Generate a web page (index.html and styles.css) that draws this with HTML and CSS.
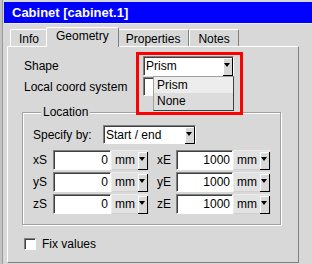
FILE: index.html
```html
<!DOCTYPE html>
<html lang="en">
<head>
    <meta charset="UTF-8">
    <title>Cabinet [cabinet.1]</title>
    <link rel="stylesheet" href="styles.css">
</head>
<body>
    <div class="window">
        <div class="titlebar">Cabinet [cabinet.1]</div>

        <div class="body">
            <div class="tabs">
                <div class="tab">Info</div>
                <div class="tab active">Geometry</div>
                <div class="tab">Properties</div>
                <div class="tab">Notes</div>
            </div>

            <div class="panel">
                <div class="form-top">
                    <span class="label">Shape</span>
                    <div class="combo">
                        <span class="combo-text">Prism</span>
                        <span class="drop-btn"></span>
                    </div>
                    <span class="label">Local coord system</span>
                    <div class="combo coord"></div>
                </div>

                <fieldset class="group">
                    <legend>Location</legend>
                    <div class="specify">
                        <span class="label specify-label">Specify by:</span>
                        <div class="combo specify-combo">
                            <span class="combo-text">Start / end</span>
                            <span class="drop-btn"></span>
                        </div>
                    </div>

                    <div class="coords">
                        <span class="label">xS</span>
                        <div class="edit">0</div>
                        <div class="unit"><span class="combo-text">mm</span><span class="drop-btn"></span></div>
                        <span class="label end-label">xE</span>
                        <div class="edit">1000</div>
                        <div class="unit"><span class="combo-text">mm</span><span class="drop-btn"></span></div>

                        <span class="label">yS</span>
                        <div class="edit">0</div>
                        <div class="unit"><span class="combo-text">mm</span><span class="drop-btn"></span></div>
                        <span class="label end-label">yE</span>
                        <div class="edit">1000</div>
                        <div class="unit"><span class="combo-text">mm</span><span class="drop-btn"></span></div>

                        <span class="label">zS</span>
                        <div class="edit">0</div>
                        <div class="unit"><span class="combo-text">mm</span><span class="drop-btn"></span></div>
                        <span class="label end-label">zE</span>
                        <div class="edit">1000</div>
                        <div class="unit"><span class="combo-text">mm</span><span class="drop-btn"></span></div>
                    </div>
                </fieldset>

                <div class="check">
                    <span class="checkbox"></span>
                    <span>Fix values</span>
                </div>
            </div>
        </div>

        <!-- open dropdown of the Shape combo -->
        <div class="dropdown-list">
            <div class="item hover">Prism</div>
            <div class="item">None</div>
        </div>

        <!-- red highlight round the shape selector -->
        <div class="highlight"></div>
    </div>
</body>
</html>
```

FILE: styles.css
```css
body, html {
    padding: 0;
    margin: 0;
}

body {
    font-family: "Liberation Sans", Arial, sans-serif;
    font-size: 12px;
    color: #000;
}

.window {
    position: relative;
    width: 312px;
    height: 264px;
    box-sizing: border-box;
    padding: 2px 0 0 4px;
    background-color: #d8d8d8;
    box-shadow: inset 2px 0 #c4c4c4, inset 3px 0 #9a9a9a;
    overflow: hidden;
}

.titlebar {
    height: 21px;
    line-height: 21px;
    padding-left: 8px;
    background-color: #0000ff;
    color: #fff;
    font-weight: bold;
    font-size: 13px;
    border-bottom: 1px solid #ececec;
}

.body {
    padding: 3px 13px 0 3px;
}

/* tabs */
.tabs {
    display: flex;
    align-items: flex-end;
    height: 19px;
    padding-left: 3px;
}

.tab {
    height: 17px;
    line-height: 18px;
    padding: 0 8px;
    box-sizing: border-box;
    border: 1px solid;
    border-bottom: none;
    border-color: #fff #808080 transparent #fff;
    border-radius: 2px 2px 0 0;
}

.tab.active {
    position: relative;
    z-index: 1;
    height: 20px;
    line-height: 17px;
    margin: 0 -2px -1px;
    padding: 0 9px;
    background-color: #d8d8d8;
}

.panel {
    height: 217px;
    box-sizing: border-box;
    padding: 9px 0 0 14px;
    border: 1px solid;
    border-color: #fff #808080 #808080 #fff;
}

/* form controls */
.form-top {
    display: grid;
    grid-template-columns: 119px 91px;
    grid-template-rows: 20px 19px;
    row-gap: 1px;
    align-items: center;
    padding-left: 2px;
}

.combo, .edit, .unit {
    display: flex;
    align-items: center;
    height: 100%;
    box-sizing: border-box;
    border: 1px solid;
    border-color: #808080 #fff #fff #808080;
    box-shadow: inset 1px 1px #404040;
    background-color: #fff;
}

.combo-text {
    flex: 1;
    padding-left: 2px;
}

.drop-btn {
    position: relative;
    width: 10px;
    height: 100%;
    box-sizing: border-box;
    background-color: #d8d8d8;
    box-shadow: inset -1px -1px #000, inset 1px 1px #fff;
    margin-top: 1px;
}

.drop-btn::after {
    content: "";
    position: absolute;
    left: 1px;
    top: 5px;
    border-left: 3.5px solid transparent;
    border-right: 3.5px solid transparent;
    border-top: 4px solid #000;
}

/* group box */
.group {
    width: 259px;
    box-sizing: border-box;
    margin: 9px 0 0 0;
    padding: 0 8px 10px 10px;
    border: 1px solid #a0a0a0;
    box-shadow: inset 1px 1px #fff, 1px 1px #fff;
}

.group legend {
    margin-left: 8px;
    padding: 0 2px;
    line-height: 14px;
    background-color: #d8d8d8;
}

.specify {
    display: flex;
    align-items: center;
    height: 19px;
    margin-top: 6px;
}

.specify-label {
    width: 70px;
}

.specify-combo {
    width: 93px;
}

.coords {
    display: grid;
    grid-template-columns: 20px 58px 38px 27px 57px 38px;
    grid-auto-rows: 20px;
    row-gap: 2px;
    align-items: center;
    margin-top: 6px;
}

.end-label {
    padding-left: 8px;
}

.edit {
    justify-content: flex-end;
    padding-right: 2px;
}

.unit {
    background-color: #e2e2e2;
    box-shadow: none;
    border-color: #ececec #d0d0d0 #d0d0d0 #ececec;
}

.unit .combo-text {
    padding-left: 3px;
}

/* checkbox */
.check {
    display: flex;
    align-items: center;
    gap: 6px;
    margin-top: 12px;
    padding-left: 2px;
}

.checkbox {
    width: 12px;
    height: 12px;
    box-sizing: border-box;
    border: 1px solid;
    border-color: #808080 #fff #fff #808080;
    box-shadow: inset 1px 1px #404040;
    background-color: #fff;
}

/* overlays */
.dropdown-list {
    position: absolute;
    left: 153px;
    top: 76px;
    width: 81px;
    height: 35px;
    box-sizing: border-box;
    border: 1px solid;
    border-color: #a0a0a0 #404040 #404040 #a0a0a0;
    background-color: #dcdcdc;
}

.item {
    height: 16px;
    line-height: 16px;
    padding-left: 3px;
}

.item.hover {
    background-color: #ededed;
}

.highlight {
    position: absolute;
    left: 136px;
    top: 52px;
    width: 107px;
    height: 63px;
    box-sizing: border-box;
    border: 3px solid #ff0000;
}
```
